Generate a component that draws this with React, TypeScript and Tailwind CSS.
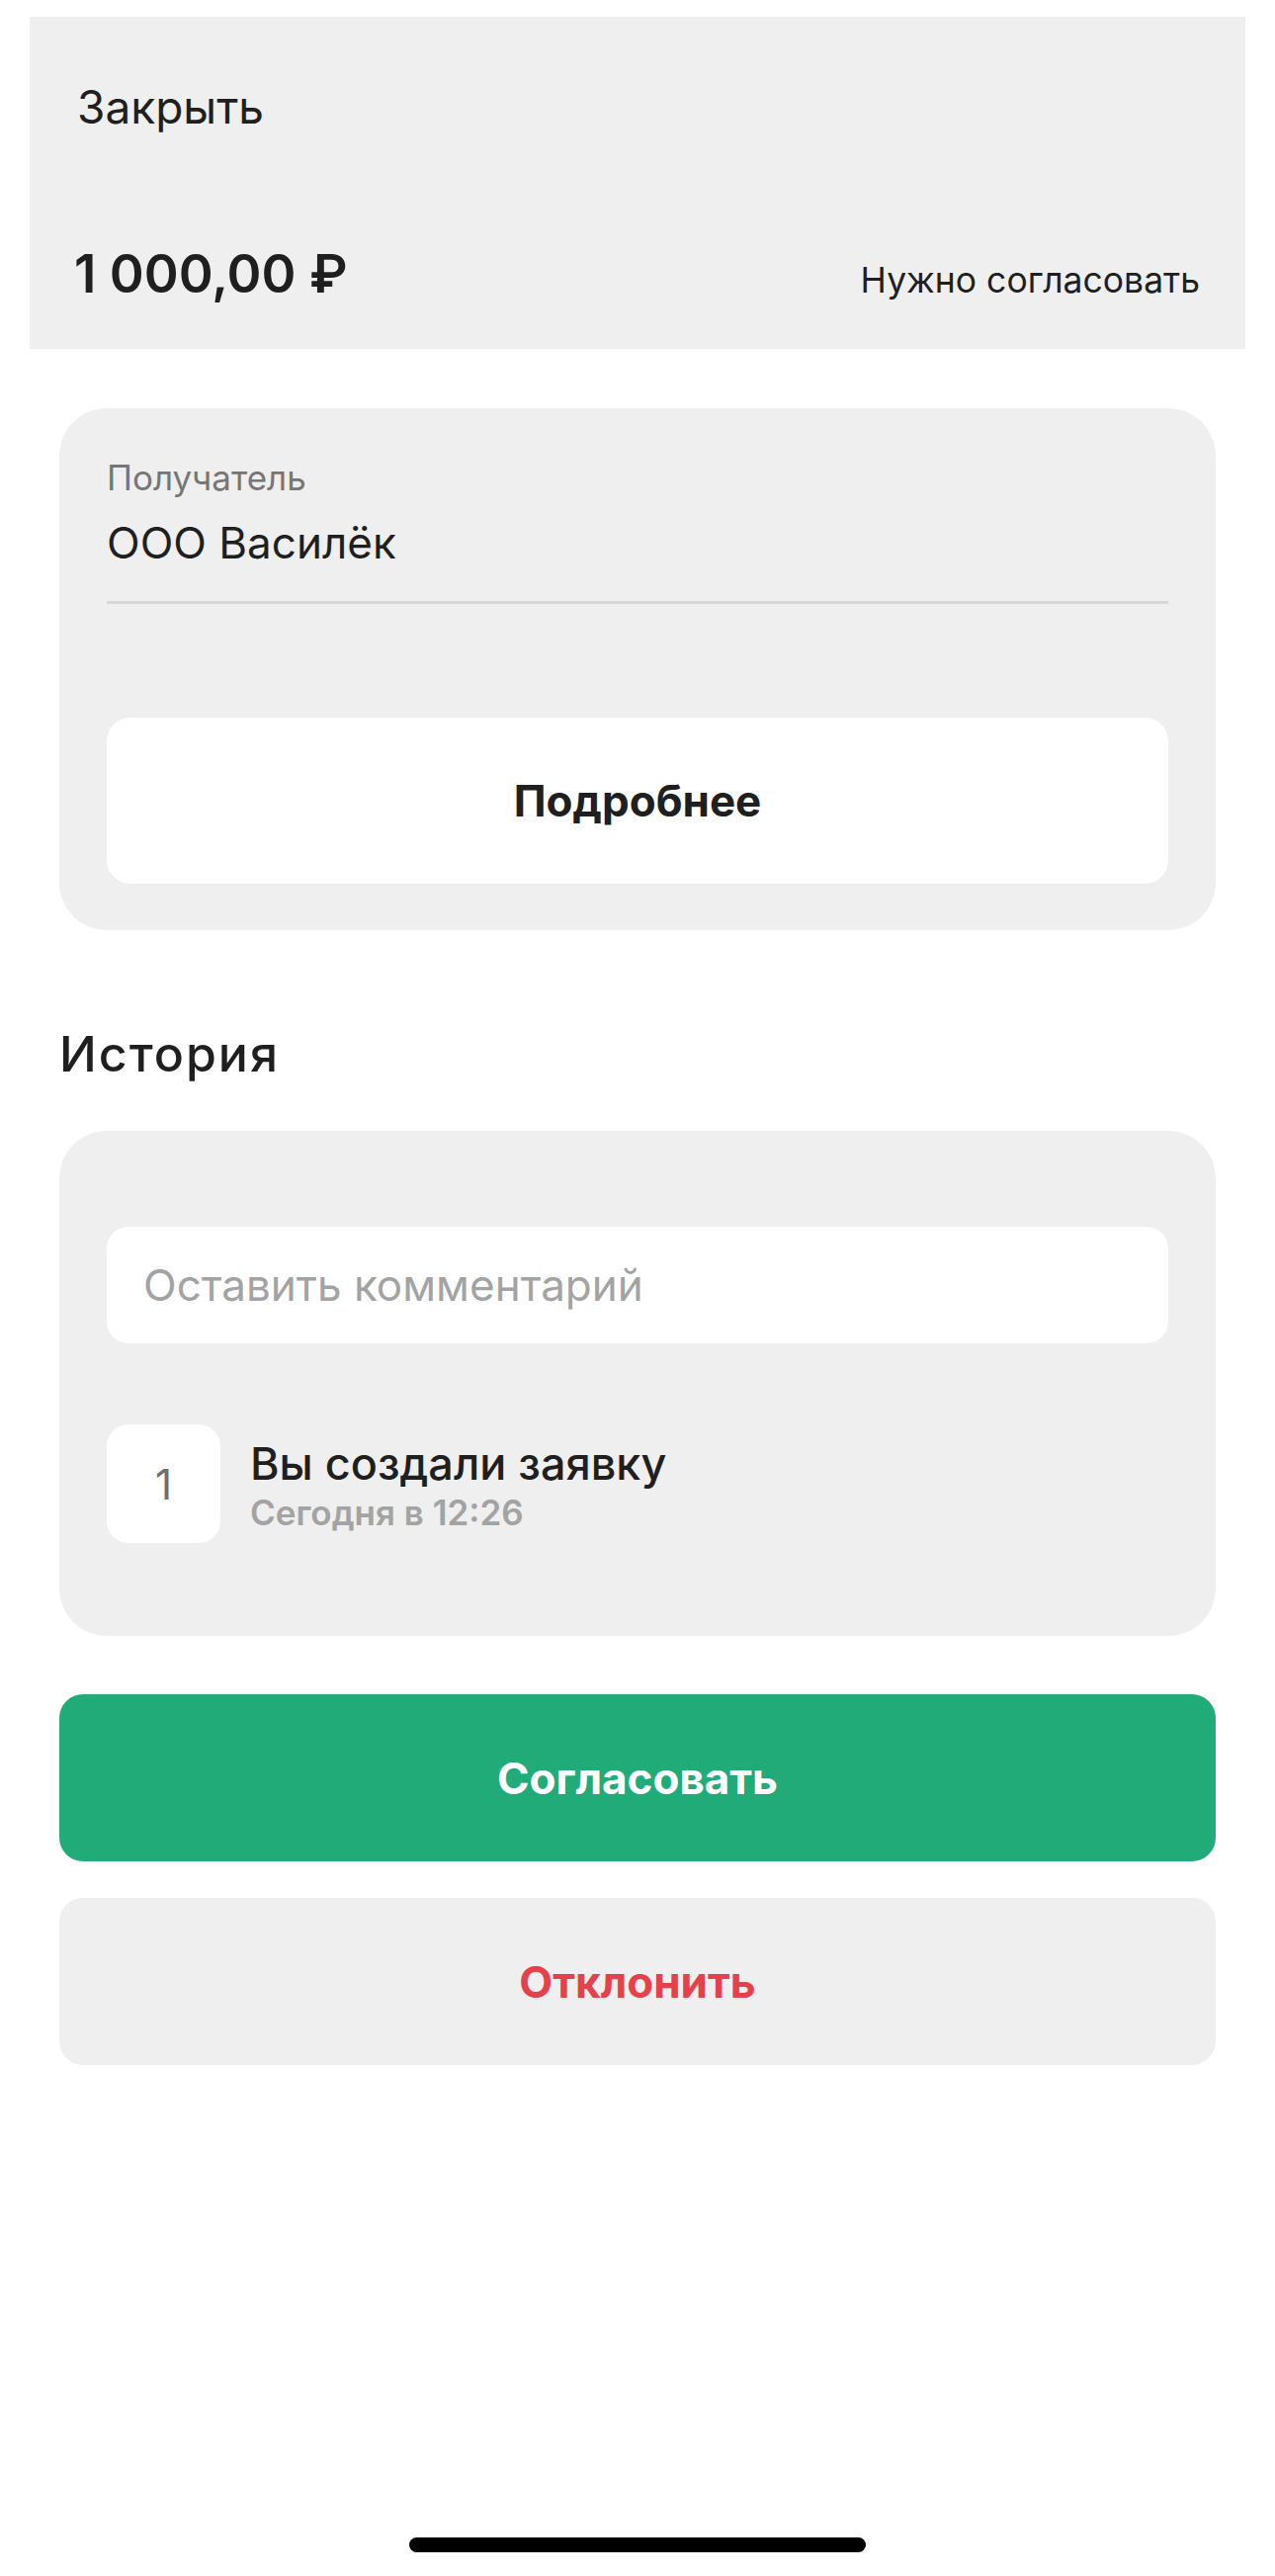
import React from "react";

const font = { fontFamily: "Inter, 'Noto Sans', sans-serif" };

export default function App() {
  return (
    <div
      className="relative w-[1290px] h-[2606px] bg-white text-[#1f1f1f] overflow-hidden"
      style={font}
    >
      <div className="pt-[17px] px-[30px]">
        <div className="h-[336px] bg-[#efefef] flex flex-col pt-[65px] pb-[39px] pl-[48px] pr-[46px]">
          <div className="text-[46px] leading-[52px] text-[#1f1f1f]">Закрыть</div>
          <div className="mt-auto flex items-baseline justify-between">
            <div className="text-[53px] leading-[60px] font-semibold -ml-[3px]">
              1 000,00 ₽
            </div>
            <div className="text-[35.5px] leading-[60px]">Нужно согласовать</div>
          </div>
        </div>
      </div>

      <div className="px-[60px]">
        <div className="mt-[60px] rounded-[48px] bg-[#efefef] px-[48px] pt-[50px] pb-[47px]">
          <div className="text-[35px] leading-[40px] text-[#767676]">Получатель</div>
          <div className="mt-[20px] text-[44px] leading-[52px]">ООО Василёк</div>
          <div className="mt-[33px] h-[3px] bg-[#d8d8d8]" />
          <div className="mt-[115px] h-[168px] rounded-[24px] bg-white flex items-center justify-center text-[44px] font-bold">
            Подробнее
          </div>
        </div>

        <div className="mt-[96px] text-[50px] leading-[58px] font-medium tracking-[2px]">История</div>

        <div className="mt-[49px] rounded-[48px] bg-[#efefef] px-[48px] pt-[97px] pb-[94px]">
          <div className="h-[118px] rounded-[22px] bg-white flex items-center pl-[37px] text-[44px] text-[#a3a3a3]">
            Оставить комментарий
          </div>
          <div className="mt-[82px] flex items-center">
            <div className="w-[115px] h-[120px] rounded-[22px] bg-white flex items-center justify-center text-[42px] text-[#6e6e6e]">
              1
            </div>
            <div className="ml-[30px] pt-[4px] flex flex-col">
              <div className="text-[45px] leading-[52px] font-medium">Вы создали заявку</div>
              <div className="mt-[2px] text-[35px] leading-[42px] font-semibold text-[#a3a3a3]">
                Сегодня в 12:26
              </div>
            </div>
          </div>
        </div>

        <div className="mt-[59px] h-[169px] rounded-[24px] bg-[#21ab78] flex items-center justify-center text-[44px] font-bold text-white">
          Согласовать
        </div>
        <div className="mt-[37px] h-[169px] rounded-[24px] bg-[#efefef] flex items-center justify-center text-[44px] font-bold text-[#e6414a]">
          Отклонить
        </div>
      </div>

      <div className="absolute left-[414px] bottom-[24px] w-[462px] h-[15px] rounded-full bg-black" />
    </div>
  );
}
